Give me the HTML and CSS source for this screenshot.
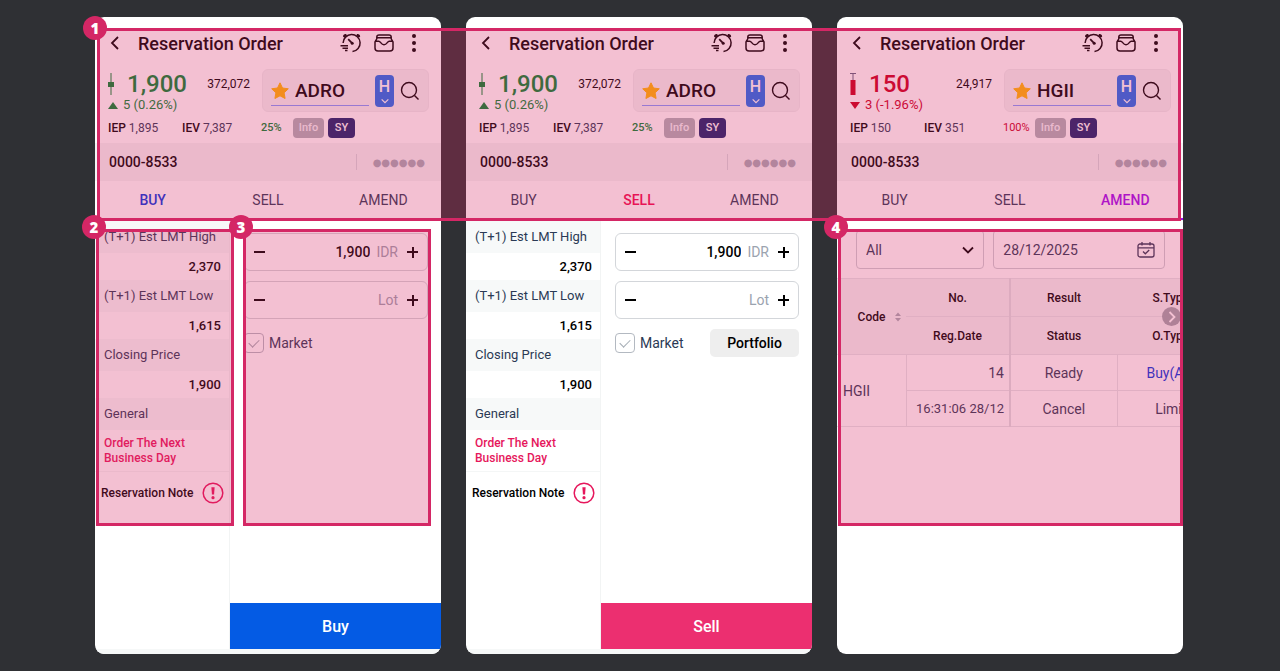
FILE: index.html
```html
<!DOCTYPE html>
<html lang="en">
<head>
    <meta charset="UTF-8">
    <meta name="viewport" content="width=device-width, initial-scale=1.0">
    <title>Reservation Order</title>
    <link rel="stylesheet" href="styles.css">
</head>
<body>
    <!-- shared icons -->
    <svg class="sprite" width="0" height="0" aria-hidden="true">
        <symbol id="back" viewBox="0 0 10 14"><path d="M8 1 2 7l6 6" fill="none" stroke="currentColor" stroke-width="1.8"/></symbol>
        <symbol id="timer" viewBox="0 0 22 20">
            <g fill="none" stroke="currentColor" stroke-width="1.5">
                <path d="M3.1 10A8.5 8.5 0 1 1 12.500 18.500"/>
                <path d="m8.200 6.200 3.600 3.600" stroke-width="1.800"/>
                <path d="M.5 12.800H8M2.500 15.200H8M5 17.600h2.500"/>
            </g>
            <path d="M3 3.600C3 1.800 4.600.8 6.300 1.200L7 2.600 4.300 4.800zM20.200 3.600c0-1.800-1.600-2.800-3.300-2.400l-.7 1.400 2.700 2.200z" fill="currentColor"/>
            <circle cx="12.200" cy="10.200" r="1.500" fill="currentColor"/>
        </symbol>
        <symbol id="inbox" viewBox="0 0 20 18">
            <g fill="none" stroke="currentColor" stroke-width="1.5" stroke-linejoin="round">
                <path d="M2.800 5V3A2.200 2.200 0 0 1 5 .9h10A2.200 2.200 0 0 1 17.200 3v2"/>
                <path d="M3 3.800h14"/>
                <path d="M2.800 5 1 8v6a3 3 0 0 0 3 3h12a3 3 0 0 0 3-3V8l-1.800-3"/>
                <path d="M1.200 7.200h3.600c1.800 0 2.200 3.600 5.200 3.600s3.400-3.600 5.200-3.600h3.600"/>
            </g>
        </symbol>
        <symbol id="more" viewBox="0 0 4 18"><g fill="currentColor"><circle cx="2" cy="2" r="2"/><circle cx="2" cy="9" r="2"/><circle cx="2" cy="16" r="2"/></g></symbol>
        <symbol id="star" viewBox="0 0 18 17"><path d="m9 .8 2.500 5.200 5.800.8-4.200 4 1 5.700L9 13.800l-5.100 2.700 1-5.700-4.200-4L6.500 6z" fill="#ffb800" stroke="#ffb800" stroke-linejoin="round"/></symbol>
        <symbol id="search" viewBox="0 0 20 20"><circle cx="9" cy="9" r="7.500" fill="none" stroke="currentColor" stroke-width="1.400"/><path d="m14.500 14.500 4 4" stroke="currentColor" stroke-width="1.400"/></symbol>
        <symbol id="down" viewBox="0 0 12 8"><path d="m1 1.500 5 5 5-5" fill="none" stroke="currentColor" stroke-width="1.800"/></symbol>
        <symbol id="candle-up" viewBox="0 0 6 22"><path d="M3 0v22" stroke="currentColor"/><path d="M0 9h6v5H0z" fill="currentColor"/></symbol>
        <symbol id="candle-down" viewBox="0 0 6 22"><path d="M0 .5h6M3 0v8" stroke="#5d6480"/><path d="M.5 7h5v15h-5z" fill="currentColor"/></symbol>
        <symbol id="note" viewBox="0 0 22 22"><circle cx="11" cy="11" r="9.800" fill="none" stroke="currentColor" stroke-width="1.500"/><path d="M9.400 5.200h3.200l-.5 7.300H9.900z" fill="currentColor"/><circle cx="11" cy="15.700" r="1.600" fill="currentColor"/></symbol>
        <symbol id="calendar" viewBox="0 0 18 16">
            <g fill="none" stroke="currentColor" stroke-width="1.300">
                <rect x="1" y="2" width="16" height="13" rx="2"/>
                <path d="M1 5.800h16M5 0v3.500M13 0v3.500M6 9.500l2.300 2.300L12.200 8"/>
            </g>
        </symbol>
        <symbol id="sort" viewBox="0 0 6 10"><path d="M0 4 3 .5 6 4zM0 6l3 3.500L6 6z" fill="currentColor"/></symbol>
    </svg>

    <main class="board">
        <!-- BUY -->
        <div class="screen">
            <section class="phone buy">
                <header class="title-bar">
                    <button class="icon-btn" aria-label="Back"><svg width="10" height="14"><use href="#back"/></svg></button>
                    <h2>Reservation Order</h2>
                    <button class="icon-btn" aria-label="History"><svg width="22" height="20"><use href="#timer"/></svg></button>
                    <button class="icon-btn" aria-label="Inbox"><svg width="20" height="18"><use href="#inbox"/></svg></button>
                    <button class="icon-btn" aria-label="More"><svg width="4" height="18"><use href="#more"/></svg></button>
                </header>
                <div class="quote">
                    <div class="price up">
                        <div class="last">
                            <svg width="6" height="22"><use href="#candle-up"/></svg>
                            <strong>1,900</strong>
                            <span class="volume">372,072</span>
                        </div>
                        <p class="change"><span class="tri"></span>5 (0.26%)</p>
                    </div>
                    <div class="stock">
                        <label class="code"><svg width="18" height="17"><use href="#star"/></svg><input type="text" value="ADRO" aria-label="Stock code"></label>
                        <button class="holding">H<svg width="8" height="6"><use href="#down"/></svg></button>
                        <button class="icon-btn" aria-label="Search"><svg width="20" height="20"><use href="#search"/></svg></button>
                    </div>
                </div>
                <div class="indicative">
                    <span><b>IEP</b> 1,895</span>
                    <span><b>IEV</b> 7,387</span>
                    <span class="rate up">25%</span>
                    <button class="tag info">Info</button>
                    <button class="tag sy">SY</button>
                </div>
                <div class="account">
                    <strong>0000-8533</strong>
                    <input type="password" placeholder="●●●●●●" aria-label="PIN">
                </div>
                <nav class="tabs">
                    <button class="active">BUY</button>
                    <button>SELL</button>
                    <button>AMEND</button>
                </nav>
                <div class="order">
                    <aside class="limits">
                        <dl>
                            <dt>(T+1) Est LMT High</dt><dd>2,370</dd>
                            <dt>(T+1) Est LMT Low</dt><dd>1,615</dd>
                            <dt>Closing Price</dt><dd>1,900</dd>
                            <dt>General</dt>
                        </dl>
                        <p class="next-day">Order The Next Business Day</p>
                        <p class="note">Reservation Note <svg width="22" height="22"><use href="#note"/></svg></p>
                    </aside>
                    <form class="ticket">
                        <div class="fields">
                            <div class="stepper">
                                <button type="button" class="minus" aria-label="Less"></button>
                                <input type="text" id="buy-price" value="1,900">
                                <label for="buy-price">IDR</label>
                                <button type="button" class="plus" aria-label="More"></button>
                            </div>
                            <div class="stepper">
                                <button type="button" class="minus" aria-label="Less"></button>
                                <input type="text" id="buy-lot">
                                <label for="buy-lot">Lot</label>
                                <button type="button" class="plus" aria-label="More"></button>
                            </div>
                            <div class="options">
                                <label class="check"><input type="checkbox"> Market</label>
                            </div>
                        </div>
                        <button type="button" class="submit">Buy</button>
                    </form>
                </div>
            </section>
            <div class="mark mark-limits"><span class="badge">2</span></div>
            <div class="mark mark-ticket"><span class="badge">3</span></div>
        </div>

        <!-- SELL -->
        <div class="screen">
            <section class="phone sell">
                <header class="title-bar">
                    <button class="icon-btn" aria-label="Back"><svg width="10" height="14"><use href="#back"/></svg></button>
                    <h2>Reservation Order</h2>
                    <button class="icon-btn" aria-label="History"><svg width="22" height="20"><use href="#timer"/></svg></button>
                    <button class="icon-btn" aria-label="Inbox"><svg width="20" height="18"><use href="#inbox"/></svg></button>
                    <button class="icon-btn" aria-label="More"><svg width="4" height="18"><use href="#more"/></svg></button>
                </header>
                <div class="quote">
                    <div class="price up">
                        <div class="last">
                            <svg width="6" height="22"><use href="#candle-up"/></svg>
                            <strong>1,900</strong>
                            <span class="volume">372,072</span>
                        </div>
                        <p class="change"><span class="tri"></span>5 (0.26%)</p>
                    </div>
                    <div class="stock">
                        <label class="code"><svg width="18" height="17"><use href="#star"/></svg><input type="text" value="ADRO" aria-label="Stock code"></label>
                        <button class="holding">H<svg width="8" height="6"><use href="#down"/></svg></button>
                        <button class="icon-btn" aria-label="Search"><svg width="20" height="20"><use href="#search"/></svg></button>
                    </div>
                </div>
                <div class="indicative">
                    <span><b>IEP</b> 1,895</span>
                    <span><b>IEV</b> 7,387</span>
                    <span class="rate up">25%</span>
                    <button class="tag info">Info</button>
                    <button class="tag sy">SY</button>
                </div>
                <div class="account">
                    <strong>0000-8533</strong>
                    <input type="password" placeholder="●●●●●●" aria-label="PIN">
                </div>
                <nav class="tabs">
                    <button>BUY</button>
                    <button class="active">SELL</button>
                    <button>AMEND</button>
                </nav>
                <div class="order">
                    <aside class="limits">
                        <dl>
                            <dt>(T+1) Est LMT High</dt><dd>2,370</dd>
                            <dt>(T+1) Est LMT Low</dt><dd>1,615</dd>
                            <dt>Closing Price</dt><dd>1,900</dd>
                            <dt>General</dt>
                        </dl>
                        <p class="next-day">Order The Next Business Day</p>
                        <p class="note">Reservation Note <svg width="22" height="22"><use href="#note"/></svg></p>
                    </aside>
                    <form class="ticket">
                        <div class="fields">
                            <div class="stepper">
                                <button type="button" class="minus" aria-label="Less"></button>
                                <input type="text" id="sell-price" value="1,900">
                                <label for="sell-price">IDR</label>
                                <button type="button" class="plus" aria-label="More"></button>
                            </div>
                            <div class="stepper">
                                <button type="button" class="minus" aria-label="Less"></button>
                                <input type="text" id="sell-lot">
                                <label for="sell-lot">Lot</label>
                                <button type="button" class="plus" aria-label="More"></button>
                            </div>
                            <div class="options">
                                <label class="check"><input type="checkbox"> Market</label>
                                <button type="button" class="portfolio">Portfolio</button>
                            </div>
                        </div>
                        <button type="button" class="submit">Sell</button>
                    </form>
                </div>
            </section>
        </div>

        <!-- AMEND -->
        <div class="screen">
            <section class="phone amend">
                <header class="title-bar">
                    <button class="icon-btn" aria-label="Back"><svg width="10" height="14"><use href="#back"/></svg></button>
                    <h2>Reservation Order</h2>
                    <button class="icon-btn" aria-label="History"><svg width="22" height="20"><use href="#timer"/></svg></button>
                    <button class="icon-btn" aria-label="Inbox"><svg width="20" height="18"><use href="#inbox"/></svg></button>
                    <button class="icon-btn" aria-label="More"><svg width="4" height="18"><use href="#more"/></svg></button>
                </header>
                <div class="quote">
                    <div class="price down">
                        <div class="last">
                            <svg width="6" height="22"><use href="#candle-down"/></svg>
                            <strong>150</strong>
                            <span class="volume">24,917</span>
                        </div>
                        <p class="change"><span class="tri"></span>3 (-1.96%)</p>
                    </div>
                    <div class="stock">
                        <label class="code"><svg width="18" height="17"><use href="#star"/></svg><input type="text" value="HGII" aria-label="Stock code"></label>
                        <button class="holding">H<svg width="8" height="6"><use href="#down"/></svg></button>
                        <button class="icon-btn" aria-label="Search"><svg width="20" height="20"><use href="#search"/></svg></button>
                    </div>
                </div>
                <div class="indicative">
                    <span><b>IEP</b> 150</span>
                    <span><b>IEV</b> 351</span>
                    <span class="rate down">100%</span>
                    <button class="tag info">Info</button>
                    <button class="tag sy">SY</button>
                </div>
                <div class="account">
                    <strong>0000-8533</strong>
                    <input type="password" placeholder="●●●●●●" aria-label="PIN">
                </div>
                <nav class="tabs">
                    <button>BUY</button>
                    <button>SELL</button>
                    <button class="active">AMEND</button>
                </nav>
                <div class="filters">
                    <label class="filter type">
                        <select aria-label="Type"><option>All</option></select>
                        <svg width="12" height="8"><use href="#down"/></svg>
                    </label>
                    <label class="filter date">
                        <input type="text" value="28/12/2025" aria-label="Date">
                        <svg width="18" height="16"><use href="#calendar"/></svg>
                    </label>
                </div>
                <div class="list">
                    <table>
                        <colgroup><col class="c-code"><col class="c-date"><col class="c-status"><col class="c-type"></colgroup>
                        <thead>
                            <tr><th rowspan="2" class="code-head">Code <svg width="6" height="10"><use href="#sort"/></svg></th><th class="edge">No.</th><th>Result</th><th>S.Type</th></tr>
                            <tr><th class="edge">Reg.Date</th><th>Status</th><th>O.Type</th></tr>
                        </thead>
                        <tbody>
                            <tr><td rowspan="2" class="name">HGII</td><td class="num edge">14</td><td>Ready</td><td class="side">Buy(All)</td></tr>
                            <tr><td class="num time edge">16:31:06 28/12</td><td>Cancel</td><td>Limit</td></tr>
                        </tbody>
                    </table>
                    <button class="next" aria-label="Next columns"><svg width="12" height="8"><use href="#down"/></svg></button>
                </div>
            </section>
            <div class="mark mark-list"><span class="badge">4</span></div>
        </div>

        <div class="mark mark-header"><span class="badge">1</span></div>
    </main>
</body>
</html>
```
FILE: styles.css
```css
* {
    box-sizing: border-box;
}
body {
    font-family: Roboto, "Liberation Sans", sans-serif;
    margin: 0;
    background-color: #2f3034;
    color: #000;
}
h2, p, dl, dd {
    margin: 0;
}
button, input, select {
    font-family: inherit;
    color: inherit;
    border: none;
    background: none;
    padding: 0;
    margin: 0;
    border-radius: 0;
    min-width: 0;
}
button {
    cursor: pointer;
}
svg {
    display: block;
    flex: none;
}
.sprite {
    position: absolute;
}

/* layout */
.board {
    position: relative;
    display: grid;
    grid-template-columns: repeat(3, 1fr);
    gap: 25px;
    min-height: calc(100vh - 34px);
    margin: 17px 97px 17px 95px;
}
.screen {
    position: relative;
    display: flex;
    min-width: 0;
}
.phone {
    flex: 1;
    min-width: 0;
    display: flex;
    flex-direction: column;
    background-color: #fff;
    border-radius: 9px;
    overflow: hidden;
    padding-top: 10px;
}
.buy {
    --accent: #0038e0;
    --fill: #045be4;
}
.sell {
    --accent: #ee0c50;
    --fill: #ec2f70;
}
.amend {
    --accent: #a00df0;
}

/* header */
.title-bar {
    display: flex;
    align-items: center;
    gap: 12px;
    height: 32px;
    padding: 0 25px 0 15px;
}
.title-bar h2 {
    flex: 1;
    font-size: 18px;
    font-weight: 500;
    padding-left: 6px;
}
.title-bar .icon-btn:last-child {
    padding-left: 6px;
}
.quote {
    display: flex;
    gap: 12px;
    padding: 10px 12px 0 13px;
}
.price {
    flex: 1;
    min-width: 0;
}
.up {
    color: #008731;
}
.down {
    color: #c8001e;
}
.last {
    display: flex;
    align-items: center;
    height: 29px;
}
.last strong {
    flex: 1;
    font-size: 24px;
    font-weight: 500;
    padding-left: 13px;
}
.volume {
    font-size: 12px;
    color: #000;
}
.change {
    display: flex;
    align-items: center;
    gap: 5px;
    font-size: 13px;
    line-height: 14px;
}
.tri {
    border: 5px solid transparent;
    border-top: none;
    border-bottom: 7px solid currentColor;
}
.down .tri {
    border-top: 7px solid currentColor;
    border-bottom: none;
}
.stock {
    display: flex;
    align-items: center;
    gap: 6px;
    width: 167px;
    height: 43px;
    padding: 0 8px;
    background-color: #f4f5f5;
    border: 1px solid #eeeff0;
    border-radius: 6px;
}
.code {
    flex: 1;
    min-width: 0;
    display: flex;
    align-items: center;
    gap: 6px;
    height: 30px;
    border-bottom: 1px solid #7f9cff;
}
.code input {
    width: 100%;
    font-size: 19px;
    font-weight: 500;
}
.holding {
    display: flex;
    flex-direction: column;
    align-items: center;
    justify-content: center;
    gap: 2px;
    width: 19px;
    height: 32px;
    background-color: #1a70ee;
    border-radius: 4px;
    color: #fff;
    font-size: 16px;
    line-height: 18px;
    font-weight: 500;
}
.indicative {
    display: grid;
    grid-template-columns: 70px 75px 28px 31px 27px;
    column-gap: 4px;
    align-items: center;
    height: 31px;
    padding: 0 13px;
    font-size: 12px;
    white-space: nowrap;
    color: #2b3a55;
}
.indicative b {
    font-weight: 500;
    color: #000;
}
.rate {
    font-size: 11px;
}
.indicative .up {
    color: #008731;
    font-weight: 500;
}
.indicative .down {
    color: #c8001e;
}
.tag {
    height: 20px;
    border-radius: 4px;
    color: #fff;
    font-size: 11px;
    font-weight: 500;
}
.info {
    background-color: #acb2b8;
    color: #f4f6f8;
}
.sy {
    background-color: #14246b;
}
.account {
    display: flex;
    align-items: center;
    justify-content: space-between;
    height: 38px;
    padding: 0 16px 0 14px;
    background-color: #f4f5f5;
}
.account strong {
    font-size: 14px;
    font-weight: 500;
}
.account input {
    width: 69px;
    height: 16px;
    font-size: 10px;
    text-align: right;
    border-left: 1px solid #d5d9dd;
}
.account input::placeholder {
    font-family: "DejaVu Sans", sans-serif;
    color: #a5adb5;
}
.tabs {
    display: grid;
    grid-template-columns: repeat(3, 1fr);
    height: 40px;
    border-bottom: 1px solid #eef0f1;
}
.tabs button {
    font-size: 14px;
    color: #2b3a55;
    border-bottom: 2px solid transparent;
}
.tabs .active {
    color: var(--accent);
    font-weight: 500;
    border-color: var(--accent);
}

/* order body */
.order {
    flex: 1;
    display: flex;
    border-bottom: 5px solid #f6f8f8;
}
.limits {
    width: 135px;
    border-right: 1px solid #f2f4f4;
    font-size: 13px;
}
.limits dt {
    height: 32px;
    line-height: 32px;
    padding-left: 9px;
    background-color: #f7f9f9;
    color: #2b3a55;
}
.limits dd {
    height: 27px;
    line-height: 27px;
    padding-right: 8px;
    text-align: right;
    font-weight: 500;
}
.next-day {
    padding: 6px 24px 5px 9px;
    line-height: 15px;
    font-size: 12px;
    font-weight: 500;
    color: #e6175c;
    border-bottom: 1px solid #f4f6f6;
}
.note {
    display: flex;
    align-items: center;
    justify-content: space-between;
    height: 42px;
    padding: 0 5px 0 6px;
    font-size: 12px;
    font-weight: 500;
    white-space: nowrap;
}
.note svg {
    color: #e6175c;
}
.ticket {
    flex: 1;
    min-width: 0;
    display: flex;
    flex-direction: column;
    justify-content: space-between;
}
.fields {
    display: flex;
    flex-direction: column;
    gap: 10px;
    padding: 12px 13px 0 14px;
}
.stepper {
    display: flex;
    align-items: center;
    gap: 6px;
    height: 38px;
    padding: 0 9px;
    border: 1px solid #d3d6da;
    border-radius: 6px;
    font-size: 14px;
}
.stepper input {
    flex: 1;
    width: 0;
    font-size: 14px;
    font-weight: 500;
    text-align: right;
}
.stepper label {
    color: #9ba3af;
}
.minus, .plus {
    width: 11px;
    height: 11px;
    background: linear-gradient(#000, #000) center / 11px 2px no-repeat;
}
.plus {
    margin-left: 3px;
    background: linear-gradient(#000, #000) center / 11px 2px no-repeat, linear-gradient(#000, #000) center / 2px 11px no-repeat;
}
.options {
    display: flex;
    align-items: center;
    justify-content: space-between;
    height: 28px;
}
.check {
    display: flex;
    align-items: center;
    gap: 5px;
    font-size: 14px;
    color: #2b3a55;
}
.check input {
    appearance: none;
    display: grid;
    place-items: center;
    width: 20px;
    height: 20px;
    border: 1px solid #b3b9c1;
    border-radius: 4px;
}
.check input::before {
    content: "";
    width: 9px;
    height: 5px;
    margin-bottom: 3px;
    border-left: 1px solid #a5adb5;
    border-bottom: 1px solid #a5adb5;
    transform: rotate(-45deg);
}
.portfolio {
    width: 89px;
    height: 28px;
    background-color: #eee;
    border-radius: 5px;
    font-size: 14px;
    font-weight: 500;
}
.submit {
    height: 46px;
    background-color: var(--fill);
    color: #fff;
    font-size: 16px;
    font-weight: 500;
}

/* amend body */
.filters {
    display: flex;
    gap: 9px;
    padding: 9px 18px 9px 19px;
}
.filter {
    display: flex;
    align-items: center;
    height: 39px;
    padding: 0 9px;
    border: 1px solid #ccd0d5;
    border-radius: 4px;
    color: #2b3a55;
}
.filter select, .filter input {
    flex: 1;
    width: 0;
    appearance: none;
    font-size: 14px;
}
.type {
    flex: 5;
}
.type svg {
    color: #000;
}
.date {
    flex: 7;
}
.list {
    position: relative;
}
table {
    width: 388px;
    table-layout: fixed;
    border-collapse: collapse;
    font-size: 14px;
    color: #2b3a55;
}
.c-code {
    width: 69px;
}
.c-date {
    width: 104px;
}
.c-status {
    width: 107px;
}
th, td {
    height: 36px;
    padding: 0;
    border: 1px solid #e4e7ea;
    text-align: center;
    white-space: nowrap;
}
th {
    height: 38px;
    background-color: #f4f5f5;
    border-left: none;
    border-right: none;
    font-size: 12px;
    font-weight: 500;
    color: #000;
}
.code-head {
    padding-left: 16px;
}
.code-head svg {
    display: inline-block;
    margin-left: 7px;
    color: #a5adb5;
    vertical-align: middle;
}
.edge {
    border-right: 2px solid #dfe2e5;
}
.name {
    text-align: left;
    padding-left: 6px;
    border-left: none;
}
.num {
    text-align: right;
    padding-right: 5px;
}
.time {
    font-size: 13px;
}
.side {
    color: #0038e0;
}
.next {
    position: absolute;
    top: 29px;
    right: 2px;
    display: grid;
    place-items: center;
    width: 19px;
    height: 19px;
    border-radius: 50%;
    background-color: #a0a6ad;
    color: #fff;
}
.next svg {
    transform: rotate(-90deg);
}

/* numbered highlights */
.mark {
    position: absolute;
    top: 212px;
    height: 297px;
    border: 3px solid #d42765;
    background-color: rgba(212, 38, 100, 0.29);
    pointer-events: none;
}
.mark-header {
    top: 11px;
    left: 2px;
    right: 2px;
    height: 193px;
}
.mark-limits {
    left: 1px;
    width: 138px;
}
.mark-ticket {
    left: 148px;
    right: 10px;
}
.mark-list {
    left: 1px;
    right: 0;
}
.badge {
    position: absolute;
    top: -17px;
    left: -17px;
    width: 24px;
    height: 24px;
    border-radius: 50%;
    background-color: #d42765;
    color: #fff;
    font-family: "Open Sans", sans-serif;
    font-size: 15px;
    font-weight: 800;
    line-height: 24px;
    text-align: center;
}
.mark-header .badge {
    top: -15px;
}
```
